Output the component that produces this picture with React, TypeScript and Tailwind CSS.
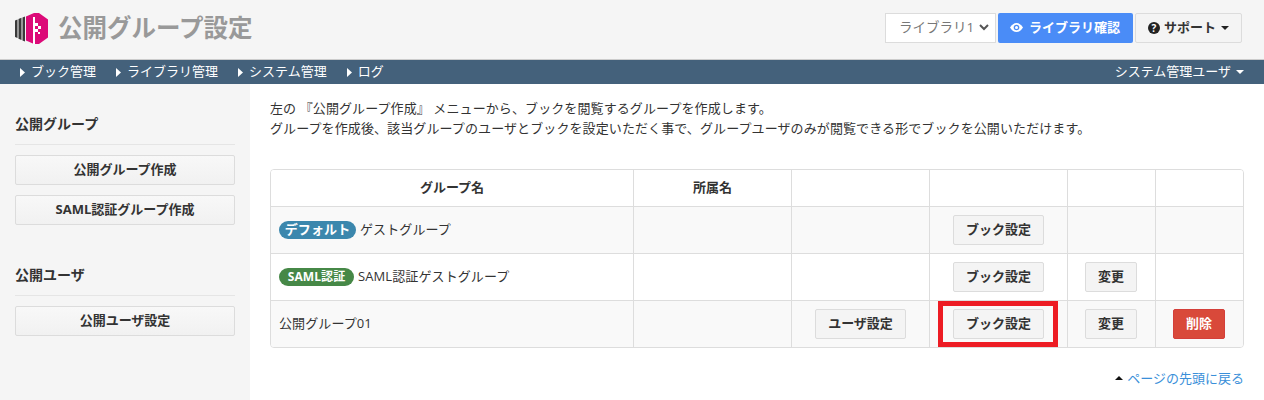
import React from "react";

const font = { fontFamily: '"Open Sans","Liberation Sans","Noto Sans CJK JP",sans-serif' };

function Btn({ children, w, danger }: { children: React.ReactNode; w: string; danger?: boolean }) {
  return (
    <span
      className={
        danger
          ? `inline-flex h-[30px] items-center justify-center rounded-[2px] border border-[#d43f3a] bg-[#d9493a] text-[13px] font-bold text-white ${w}`
          : `inline-flex h-[30px] items-center justify-center rounded-[2px] border border-[#dcdcdc] bg-[#f4f4f4] text-[13px] font-bold text-[#333] ${w}`
      }
    >
      {children}
    </span>
  );
}

function SideBtn({ children }: { children: React.ReactNode }) {
  return (
    <div className="flex h-[30px] items-center justify-center rounded-[2px] border border-[#dcdcdc] bg-linear-to-b from-[#f8f8f8] to-[#f1f1f1] text-[13px] font-bold text-[#333]">
      {children}
    </div>
  );
}

function NavItem({ children }: { children: React.ReactNode }) {
  return (
    <span className="flex items-center gap-[6px]">
      <svg width="5" height="9" viewBox="0 0 5 9"><path d="M0 0l5 4.5L0 9z" fill="#fff" /></svg>
      {children}
    </span>
  );
}

function Row({ children, alt, last }: { children: React.ReactNode; alt?: boolean; last?: boolean }) {
  return (
    <div
      className={`grid grid-cols-[362px_158px_138px_138px_88px_1fr] items-stretch ${alt ? "bg-[#f9f9f9]" : "bg-white"} ${last ? "h-[46px]" : "h-[47px] border-b border-[#dddddd]"}`}
    >
      {children}
    </div>
  );
}

function Cell({ children, first, shift }: { children?: React.ReactNode; first?: boolean; shift?: boolean }) {
  return (
    <div className={`flex items-center justify-center ${first ? "" : "border-l border-[#dddddd]"} ${shift ? "pr-px" : ""}`}>{children}</div>
  );
}

function NameCell({ children }: { children: React.ReactNode }) {
  return <div className="flex items-center pl-[8px] text-[13px] tracking-[0.1px] text-[#333]">{children}</div>;
}

export default function App() {
  return (
    <div className="flex h-[400px] w-[1264px] flex-col overflow-hidden bg-white" style={font}>
      <header className="flex h-[60px] items-center justify-between border-b border-[#cccccc] bg-[#f5f5f5] pr-[22px] pl-[15px]">
        <div className="flex items-center gap-[10px]">
          <svg className="mt-[-1px]" width="33" height="32" viewBox="0 0 33 32">
            <path d="M0 7.500l2.500-1V25l-2.500-1z" fill="#3a3a3a" />
            <path d="M3.500 6l3-1.200V27l-3-1.200z" fill="#3a3a3a" />
            <path d="M7.500 4.500L10 3.500V28.500L7.500 27.500z" fill="#3a3a3a" />
            <path d="M11 3.500L19 0h5l9 6.500v18L24 31h-5l-8-3.500z" fill="#dc0a78" />
            <rect x="18" y="4" width="2" height="27" fill="#fff" />
            <rect x="20" y="10" width="3" height="3" fill="#fff" />
            <rect x="23" y="13" width="3" height="3" fill="#fff" />
            <rect x="20" y="16" width="3" height="3" fill="#fff" />
            <rect x="23" y="19" width="2" height="2" fill="#fff" />
          </svg>
          <h1 className="mt-[-2px] text-[24.500px] leading-none font-bold text-[#999]">公開グループ設定</h1>
        </div>
        <div className="mt-[-4px] flex items-center">
          <div className="flex h-[30px] w-[111px] items-center justify-between border border-[#dcdcdc] bg-white pr-[6px] pl-[13px] text-[13.500px] text-[#777]">
            <span>ライブラリ1</span>
            <svg width="10" height="7" viewBox="0 0 10 7"><path d="M1 1l4 4 4-4" fill="none" stroke="#555" strokeWidth="2" /></svg>
          </div>
          <div className="ml-[2px] flex h-[30px] w-[135px] items-center justify-center gap-[6px] rounded-[2px] bg-[#4a8cf7] pr-[1px] text-[13px] font-bold text-white">
            <svg width="13" height="9" viewBox="0 0 13 9">
              <path d="M0 4.500C2 1.500 4 0 6.500 0S11 1.500 13 4.500C11 7.500 9 9 6.500 9S2 7.500 0 4.500z" fill="#fff" />
              <circle cx="6.500" cy="4.500" r="2.800" fill="#4a8cf7" />
              <circle cx="6.500" cy="4.500" r="1.500" fill="#fff" />
            </svg>
            ライブラリ確認
          </div>
          <div className="ml-[2px] flex h-[30px] w-[107px] items-center justify-center gap-[4px] rounded-[2px] border border-[#dcdcdc] bg-[#f4f4f4] text-[13px] font-bold text-[#333]">
            <span className="flex h-[12px] w-[12px] items-center justify-center rounded-full bg-[#222] text-[10px] leading-none text-white">?</span>
            サポート
            <svg className="ml-[1px]" width="8" height="4" viewBox="0 0 8 4"><path d="M0 0h8L4 4z" fill="#222" /></svg>
          </div>
        </div>
      </header>

      <nav className="flex h-[24px] items-center justify-between bg-[#44617b] pr-[20px] pl-[20px] text-[13px] text-white">
        <div className="flex items-center gap-[20px]">
          <NavItem>ブック管理</NavItem>
          <NavItem>ライブラリ管理</NavItem>
          <NavItem>システム管理</NavItem>
          <NavItem>ログ</NavItem>
        </div>
        <span className="flex items-center gap-[5px]">
          システム管理ユーザ
          <svg width="8" height="4" viewBox="0 0 8 4"><path d="M0 0h8L4 4z" fill="#fff" /></svg>
        </span>
      </nav>

      <div className="flex flex-1">
        <aside className="w-[250px] bg-[#f5f5f5] px-[15px]">
          <h2 className="mt-[30px] text-[14px] leading-[20px] font-bold text-[#333]">公開グループ</h2>
          <hr className="mt-[10px] mb-[10px] border-[#e5e5e5]" />
          <div className="flex flex-col gap-[10px]">
            <SideBtn>公開グループ作成</SideBtn>
            <SideBtn>SAML認証グループ作成</SideBtn>
          </div>
          <h2 className="mt-[40px] text-[14px] leading-[20px] font-bold text-[#333]">公開ユーザ</h2>
          <hr className="mt-[10px] mb-[10px] border-[#e5e5e5]" />
          <SideBtn>公開ユーザ設定</SideBtn>
        </aside>

        <main className="flex-1 pr-[20px] pl-[20px]">
          <p className="mt-[14px] text-[13px] leading-[20px] tracking-[0.1px] text-[#333]">
            左の 『公開グループ作成』 メニューから、ブックを閲覧するグループを作成します。
            <br />
            グループを作成後、該当グループのユーザとブックを設定いただく事で、グループユーザのみが閲覧できる形でブックを公開いただけます。
          </p>

          <div className="mt-[31px] overflow-hidden rounded-[4px] border border-[#dddddd]">
            <div className="grid h-[37px] grid-cols-[362px_158px_138px_138px_88px_1fr] border-b border-[#dddddd] bg-white text-[13px] font-bold text-[#333]">
              <Cell first>グループ名</Cell>
              <Cell>所属名</Cell>
              <Cell />
              <Cell />
              <Cell />
              <Cell />
            </div>
            <Row alt>
              <NameCell>
                <span className="mr-[4px] flex h-[18px] w-[77px] items-center justify-center rounded-full bg-[#3b87ad] text-[13px] font-bold text-white">デフォルト</span>
                ゲストグループ
              </NameCell>
              <Cell />
              <Cell />
              <Cell><Btn w="w-[91px]">ブック設定</Btn></Cell>
              <Cell />
              <Cell />
            </Row>
            <Row>
              <NameCell>
                <span className="mr-[4px] flex h-[18px] w-[75px] items-center justify-center rounded-full bg-[#468847] text-[12px] font-bold text-white">SAML認証</span>
                SAML認証ゲストグループ
              </NameCell>
              <Cell />
              <Cell />
              <Cell><Btn w="w-[91px]">ブック設定</Btn></Cell>
              <Cell shift><Btn w="w-[52px]">変更</Btn></Cell>
              <Cell />
            </Row>
            <Row alt last>
              <NameCell>公開グループ01</NameCell>
              <Cell />
              <Cell><Btn w="w-[91px]">ユーザ設定</Btn></Cell>
              <Cell>
                <div className="relative">
                  <Btn w="w-[91px]">ブック設定</Btn>
                  <div className="absolute top-[-8px] left-[-15px] h-[46px] w-[120px] border-[5px] border-[#ed1c24]" />
                </div>
              </Cell>
              <Cell shift><Btn w="w-[52px]">変更</Btn></Cell>
              <Cell shift><Btn danger w="w-[52px]">削除</Btn></Cell>
            </Row>
          </div>

          <div className="mt-[21px] flex items-center justify-end gap-[4px] text-[13px] leading-[18px] text-[#3a8fd9]">
            <svg width="8" height="4" viewBox="0 0 8 4"><path d="M0 4h8L4 0z" fill="#111" /></svg>
            ページの先頭に戻る
          </div>
        </main>
      </div>
    </div>
  );
}
